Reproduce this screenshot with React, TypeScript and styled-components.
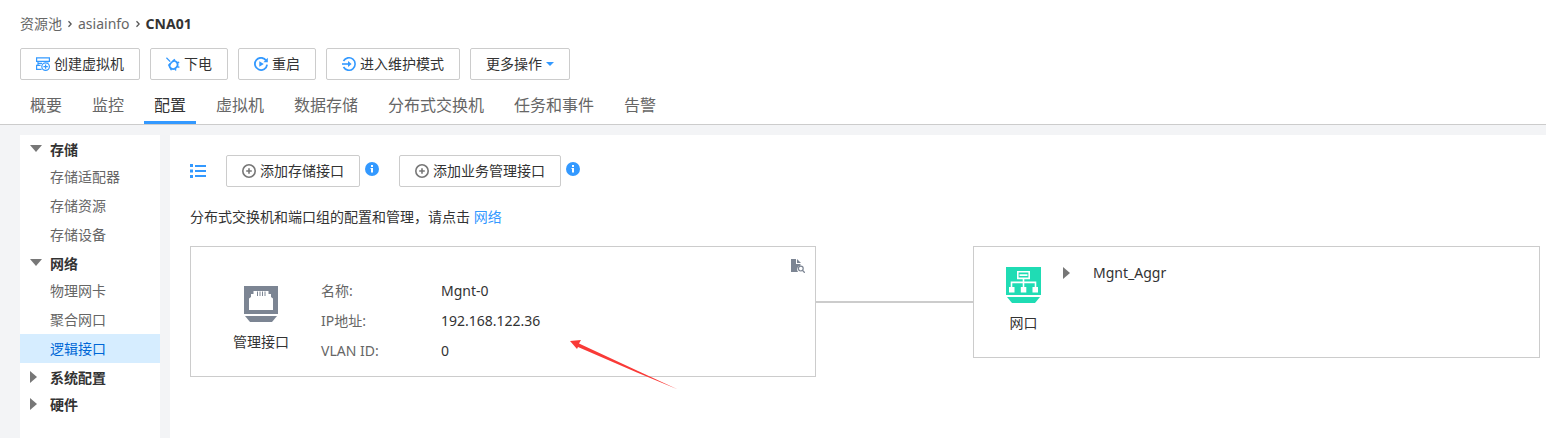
import React from "react";
import styled, { createGlobalStyle } from "styled-components";

const GlobalStyle = createGlobalStyle`
  * { box-sizing: border-box; }
  body {
    margin: 0;
    background: #f3f4f6;
    color: #333;
    font: 14px/20px "Noto Sans", "Noto Sans CJK SC", sans-serif;
  }
  ul, dl, dd { margin: 0; padding: 0; }
  ul { list-style: none; }
  a { color: inherit; text-decoration: none; }
  button { font: inherit; color: inherit; cursor: pointer; }
  svg { display: block; flex: none; }
`;

const Page = styled.div`
  display: flex;
  flex-direction: column;
  min-height: 100vh;
`;

const Header = styled.header`
  padding-top: 14px;
  background: #fff;
  border-bottom: 1px solid #ccc;
`;

const Breadcrumb = styled.nav`
  display: flex;
  align-items: center;
  gap: 6px;
  padding: 0 20px;
  color: #666;
`;

const Current = styled.strong`
  color: #333;
`;

const Toolbar = styled.div`
  display: flex;
  flex-wrap: wrap;
  gap: 10px;
  padding: 14px 20px 0;
`;

const Button = styled.button`
  display: flex;
  align-items: center;
  gap: 4px;
  height: 32px;
  padding: 0 15px;
  background: #fff;
  border: 1px solid #ccc;
  border-radius: 2px;
  white-space: nowrap;
`;

const Tabs = styled.nav`
  display: flex;
  gap: 10px;
  padding: 10px 20px 0;
`;

const Tab = styled.a<{ $active?: boolean }>`
  padding: 0 10px;
  font-size: 16px;
  line-height: 31px;
  white-space: nowrap;
  color: ${(p) => (p.$active ? "#333" : "#666")};
  border-bottom: 3px solid ${(p) => (p.$active ? "#39f" : "transparent")};
`;

const Body = styled.div`
  display: flex;
  flex: 1;
  gap: 10px;
  padding: 10px 0 0 20px;
`;

const Sidebar = styled.nav`
  flex: none;
  width: 140px;
  background: #fff;
`;

const GroupButton = styled.button`
  display: grid;
  grid-template-columns: 20px 1fr;
  align-items: center;
  width: 100%;
  height: 27px;
  padding: 0 10px;
  background: none;
  border: 0;
  text-align: left;
  font-weight: 700;
`;

const GroupName = styled.span`
  padding-top: 2px;
`;

const SideLink = styled.a<{ $active?: boolean }>`
  display: block;
  padding-left: 30px;
  line-height: 29px;
  color: ${(p) => (p.$active ? "#0067d6" : "#666")};
  background: ${(p) => (p.$active ? "#d6edff" : "transparent")};
`;

const Main = styled.main`
  flex: 1;
  min-width: 0;
  padding: 20px 6px 20px 20px;
  background: #fff;
`;

const Actions = styled.div`
  display: flex;
  flex-wrap: wrap;
  align-items: center;
  gap: 20px;
`;

const IconButton = styled.button`
  padding: 0;
  border: 0;
  background: none;
`;

const ActionWithHelp = styled.div`
  display: flex;
  align-items: flex-start;
  gap: 5px;
`;

const HelpButton = styled(IconButton)`
  padding-top: 7px;
`;

const Hint = styled.p`
  margin: 20px 0 19px;
`;

const HintLink = styled.a`
  color: #39f;
`;

const Topology = styled.div`
  display: grid;
  grid-template-columns: 626fr 157fr 567fr;
  align-items: start;
`;

const Card = styled.section`
  position: relative;
  display: flex;
  border: 1px solid #ccc;
`;

const InterfaceCard = styled(Card)`
  gap: 32px;
  padding: 29px 10px 10px 42px;
`;

const PortCard = styled(Card)`
  gap: 22px;
  padding: 20px 32px 24px;
`;

const Connector = styled.div`
  height: 57px;
  border-bottom: 2px solid #ccc;
`;

const Device = styled.div<{ $top?: number }>`
  display: flex;
  flex-direction: column;
  align-items: center;
  gap: 10px;
  padding-top: ${(p) => p.$top ?? 0}px;
  white-space: nowrap;
`;

const Details = styled.dl`
  display: grid;
  grid-template-columns: 120px auto;
  align-content: start;
  line-height: 30px;
`;

const Term = styled.dt`
  color: #666;
`;

const Value = styled.dd`
  margin: 0;
`;

const PortButton = styled.button`
  display: flex;
  align-items: center;
  align-self: flex-start;
  gap: 23px;
  height: 12px;
  padding: 0;
  border: 0;
  background: none;
`;

const DetailButton = styled(IconButton)`
  position: absolute;
  top: 12px;
  right: 10px;
`;

const PointerArrow = styled.svg`
  position: absolute;
  top: 92px;
  left: 379px;
  pointer-events: none;
`;

const Chevron = () => (
  <svg width="4" height="8" viewBox="0 0 4 8" fill="none" stroke="#555" strokeWidth="1.3">
    <path d="M.5 1.2 3.2 4 .5 6.8" />
  </svg>
);

const Triangle = ({ open }: { open?: boolean }) =>
  open ? (
    <svg width="12" height="7" viewBox="0 0 12 7" fill="#777">
      <path d="M0 0h12L6 7z" />
    </svg>
  ) : (
    <svg width="7" height="12" viewBox="0 0 7 12" fill="#777">
      <path d="M0 0v12l7-6z" />
    </svg>
  );

const CreateVmIcon = () => (
  <svg width="14" height="14" viewBox="0 0 14 14" fill="none" stroke="#39f" strokeWidth="1.2">
    <path d="M.6.800h12.800v3.600H.6zM2 4.400v3.800M12 4.400v1M0 8.400h4.600M0 12.400h5.600M.6 8.400v4M2.600 6.400h3.400" />
    <circle cx="9.6" cy="9.6" r="3.8" />
    <path d="M9.6 7.4v4.4M7.4 9.6h4.4" />
  </svg>
);

const PowerOffIcon = () => (
  <svg width="14" height="14" viewBox="0 0 14 14" fill="none" stroke="#39f">
    <path d="M.400.800 4.200 4.600" strokeWidth="1.300" />
    <path d="M2.400 8.600 8.800 2.200" strokeWidth="1.500" />
    <path d="M4.200 6.800C3 8.800 3.600 10.600 5 11.400c1.800 1 4 .6 5.400-1 1.400-1.600 1.400-3.800.2-5.200C9.600 4 8 3.600 6.800 4.400" strokeWidth="1.800" />
    <path d="m5.400 11.200-.6 2M9 11.200l.8 2.400M10.800 9.400l2.600 1M11.200 5.800l2-.6" strokeWidth="1.500" />
  </svg>
);

const RestartIcon = () => (
  <svg width="14" height="14" viewBox="0 0 14 14" fill="none" stroke="#39f" strokeWidth="1.8">
    <path d="M12.100 3.500A6.100 6.100 0 1 0 13.100 7.600" />
    <path d="M13.800.8v4.400H9.400z" fill="#39f" stroke="none" />
    <path d="M5.300 4.300v5.400L9.800 7z" fill="#39f" stroke="none" />
  </svg>
);

const EnterIcon = () => (
  <svg width="14" height="14" viewBox="0 0 14 14" fill="none" stroke="#39f" strokeWidth="1.6">
    <path d="M1.500 4A6.200 6.200 0 1 1 1.500 10" />
    <path d="M0 7h7" />
    <path d="M6 4v6l3.600-3z" fill="#39f" stroke="none" />
  </svg>
);

const CaretIcon = () => (
  <svg width="8" height="4" viewBox="0 0 8 4" fill="#39f">
    <path d="M0 0h8L4 4z" />
  </svg>
);

const ListIcon = () => (
  <svg width="16" height="14" viewBox="0 0 16 14" fill="#39f">
    <path d="M0 0h3v3H0zM5 1h11v2H5zM0 5.500h3v3H0zM5 6h11v2H5zM0 11h3v3H0zM5 11h11v2H5z" />
  </svg>
);

const AddIcon = () => (
  <svg width="14" height="14" viewBox="0 0 14 14" fill="none" stroke="#777" strokeWidth="1.6">
    <circle cx="7" cy="7" r="6.200" />
    <path d="M7 4.200v5.600M4.200 7h5.600" />
  </svg>
);

const InfoIcon = () => (
  <svg width="14" height="14" viewBox="0 0 14 14">
    <circle cx="7" cy="7" r="7" fill="#39f" />
    <path d="M6 3h2v2H6zM5.500 6H8v4.500H6V7h-.5z" fill="#fff" />
  </svg>
);

const EthernetIcon = () => (
  <svg width="34" height="36" viewBox="0 0 34 36">
    <path d="M0 0h34v28H0z" fill="#7c8593" />
    <path d="M1 30h32l-5 6H6z" fill="#7c8593" />
    <path d="M5 24V12.500l2-1.500V8h2.500V5h15v3H27v3l2 1.500V24z" fill="#fff" />
    <path d="M13.500 5.500v4.500M16 5.500v4.500M18.500 5.500v4.500M21 5.500v4.500" stroke="#7c8593" strokeWidth="1" />
  </svg>
);

const NetworkIcon = () => (
  <svg width="35" height="36" viewBox="0 0 35 36">
    <path d="M0 0h35v28H0z" fill="#1fdcb4" />
    <path d="M1 30h33l-5 6H6z" fill="#1fdcb4" />
    <g fill="none" stroke="#fff" strokeWidth="1.600">
      <path d="M11.800 4.800h11.400v6.600H11.800zM13.500 8.100h8M17.500 11.400V20M5.500 20v-4.600h24V20" />
    </g>
    <path d="M3 20h5.500v5.500H3zM14.800 20h5.500v5.500h-5.500zM26.500 20H32v5.500h-5.500z" fill="#fff" />
  </svg>
);

const FileSearchIcon = () => (
  <svg width="14" height="14" viewBox="0 0 14 14">
    <path d="M0 0h5v5h4.500v1.500A4 4 0 0 0 7 13H0z" fill="#7c8593" />
    <path d="M6 0l4 4H6z" fill="#7c8593" />
    <circle cx="9.800" cy="9.600" r="2.400" fill="none" stroke="#7c8593" strokeWidth="1.200" />
    <path d="m11.500 11.400 2.300 2.400" stroke="#7c8593" strokeWidth="1.300" />
  </svg>
);

const tabs = ["概要", "监控", "配置", "虚拟机", "数据存储", "分布式交换机", "任务和事件", "告警"];

const groups = [
  { name: "存储", items: ["存储适配器", "存储资源", "存储设备"] },
  { name: "网络", items: ["物理网卡", "聚合网口", "逻辑接口"] },
  { name: "系统配置", items: [] },
  { name: "硬件", items: [] },
];

const details = [
  ["名称:", "Mgnt-0"],
  ["IP地址:", "192.168.122.36"],
  ["VLAN ID:", "0"],
];

export default function App() {
  return (
    <Page lang="zh-CN">
      <GlobalStyle />
      <Header>
        <Breadcrumb aria-label="路径">
          <a href="#pool">资源池</a>
          <Chevron />
          <a href="#asiainfo">asiainfo</a>
          <Chevron />
          <Current>CNA01</Current>
        </Breadcrumb>
        <Toolbar>
          <Button><CreateVmIcon />创建虚拟机</Button>
          <Button><PowerOffIcon />下电</Button>
          <Button><RestartIcon />重启</Button>
          <Button><EnterIcon />进入维护模式</Button>
          <Button>更多操作<CaretIcon /></Button>
        </Toolbar>
        <Tabs>
          {tabs.map((tab) => (
            <Tab key={tab} href={`#${tab}`} $active={tab === "配置"}>{tab}</Tab>
          ))}
        </Tabs>
      </Header>
      <Body>
        <Sidebar>
          {groups.map(({ name, items }) => (
            <div key={name}>
              <GroupButton aria-expanded={items.length > 0}>
                <Triangle open={items.length > 0} />
                <GroupName>{name}</GroupName>
              </GroupButton>
              {items.length > 0 && (
                <ul>
                  {items.map((item) => (
                    <li key={item}>
                      <SideLink href={`#${item}`} $active={item === "逻辑接口"}>{item}</SideLink>
                    </li>
                  ))}
                </ul>
              )}
            </div>
          ))}
        </Sidebar>
        <Main>
          <Actions>
            <IconButton aria-label="列表"><ListIcon /></IconButton>
            {["添加存储接口", "添加业务管理接口"].map((label) => (
              <ActionWithHelp key={label}>
                <Button><AddIcon />{label}</Button>
                <HelpButton aria-label="说明"><InfoIcon /></HelpButton>
              </ActionWithHelp>
            ))}
          </Actions>
          <Hint>
            分布式交换机和端口组的配置和管理，请点击 <HintLink href="#network">网络</HintLink>
          </Hint>
          <Topology>
            <InterfaceCard>
              <Device $top={10}>
                <EthernetIcon />
                管理接口
              </Device>
              <Details>
                {details.map(([term, value]) => (
                  <React.Fragment key={term}>
                    <Term>{term}</Term>
                    <Value>{value}</Value>
                  </React.Fragment>
                ))}
              </Details>
              <DetailButton aria-label="查看详情"><FileSearchIcon /></DetailButton>
              <PointerArrow width="110" height="52" viewBox="0 0 110 52" fill="#f93a37">
                <path d="M0 2 11 1 9 4.500 68 32 108 50.500 67 33.500 8 8 7 10z" />
              </PointerArrow>
            </InterfaceCard>
            <Connector />
            <PortCard>
              <Device>
                <NetworkIcon />
                网口
              </Device>
              <PortButton aria-expanded={false}>
                <Triangle />
                Mgnt_Aggr
              </PortButton>
            </PortCard>
          </Topology>
        </Main>
      </Body>
    </Page>
  );
}
